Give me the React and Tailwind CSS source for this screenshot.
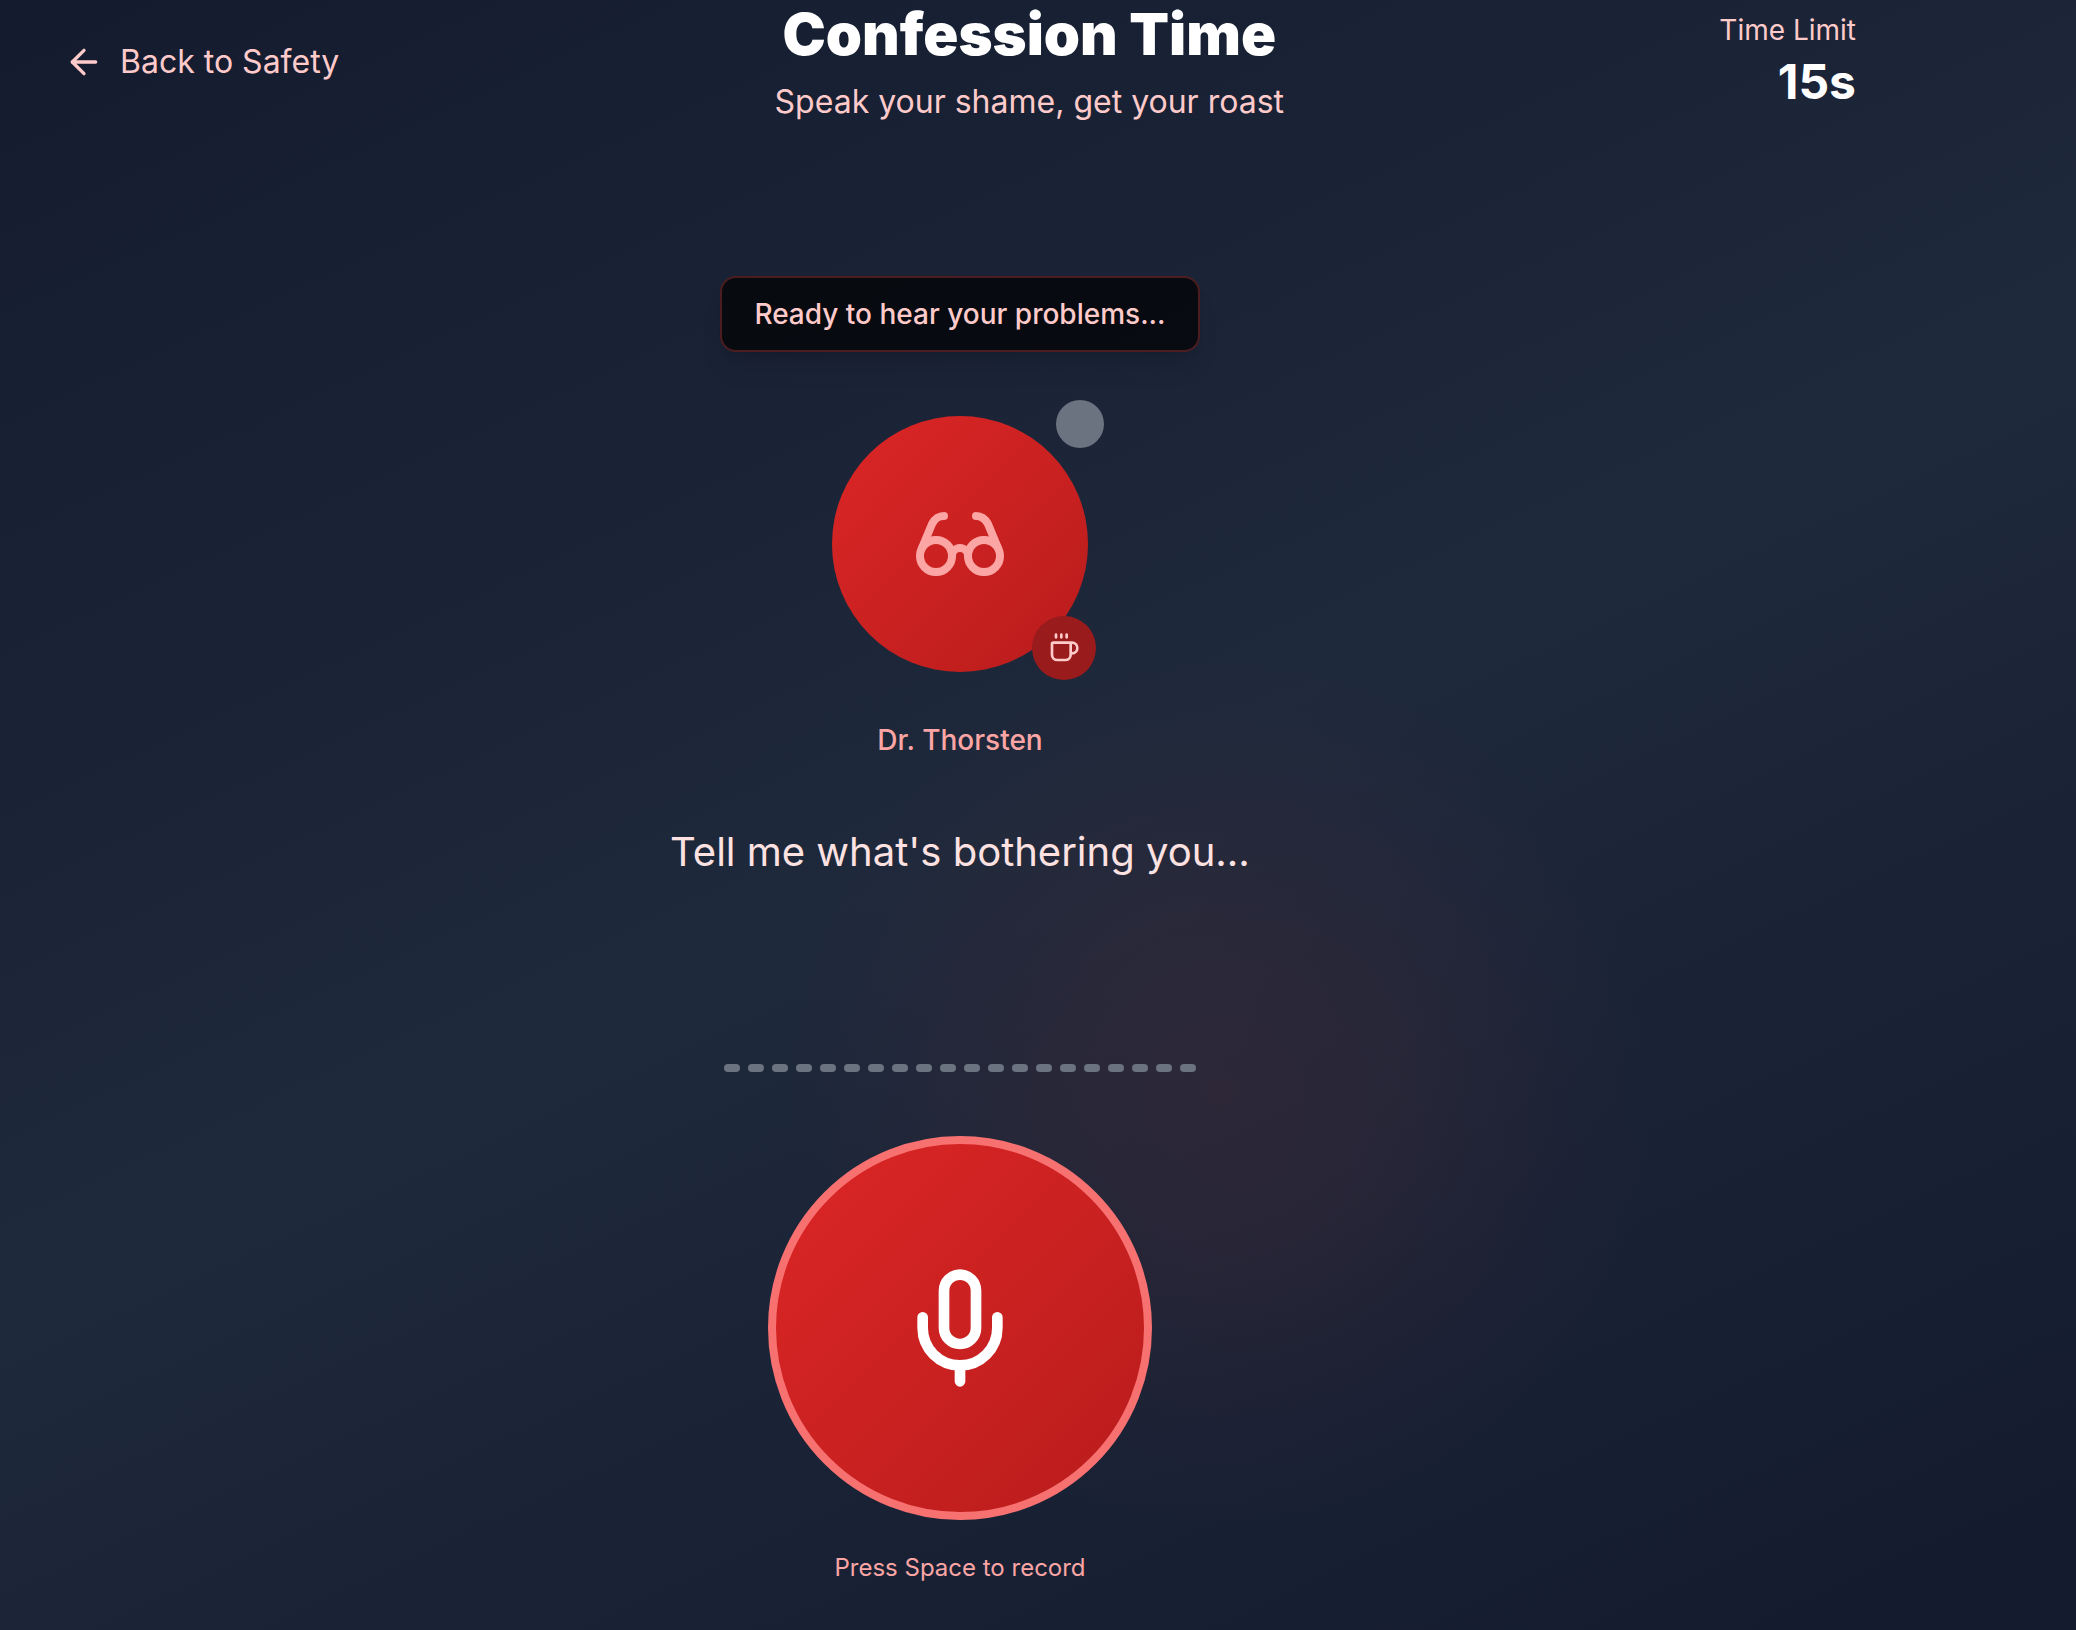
import { ArrowLeft } from "lucide-react";

const bars = Array.from({ length: 20 }, (_, i) => i);

const stroke = {
  viewBox: "0 0 24 24",
  fill: "none",
  stroke: "currentColor",
  strokeWidth: 2,
  strokeLinecap: "round",
  strokeLinejoin: "round",
  "aria-hidden": true,
};

function Glasses({ className }) {
  return (
    <svg {...stroke} className={className}>
      <circle cx="6" cy="15" r="4" />
      <circle cx="18" cy="15" r="4" />
      <path d="M14 15a2 2 0 0 0-2-2 2 2 0 0 0-2 2" />
      <path d="M2.5 13 5 7c.7-1.3 1.4-2 3-2" />
      <path d="M21.5 13 19 7c-.7-1.3-1.5-2-3-2" />
    </svg>
  );
}

function Coffee({ className }) {
  return (
    <svg {...stroke} className={className}>
      <path d="M10 2v2" />
      <path d="M14 2v2" />
      <path d="M6 2v2" />
      <path d="M16 8a1 1 0 0 1 1 1v8a4 4 0 0 1-4 4H7a4 4 0 0 1-4-4V9a1 1 0 0 1 1-1h14a4 4 0 1 1 0 8h-1" />
    </svg>
  );
}

function Mic({ className }) {
  return (
    <svg {...stroke} className={className}>
      <path d="M12 2a3 3 0 0 0-3 3v7a3 3 0 0 0 6 0V5a3 3 0 0 0-3-3Z" />
      <path d="M19 10v2a7 7 0 0 1-14 0v-2" />
      <path d="M12 19v3" />
    </svg>
  );
}

export default function App() {
  return (
    <div className="relative min-h-screen overflow-hidden bg-[linear-gradient(155deg,#141b2e_0%,#1e293b_50%,#131a2d_100%)] font-['Inter',sans-serif]">
      <div className="absolute right-[20%] bottom-[6%] size-[880px] rounded-full bg-[radial-gradient(closest-side,rgba(239,68,68,0.085),rgba(239,68,68,0.06)_40%,rgba(239,68,68,0.02)_75%,rgba(239,68,68,0))]" />
      <div className="relative max-w-[1920px]">
        <header className="flex items-center justify-between px-16">
          <button type="button" className="flex items-center gap-4 text-[32px] leading-[48px] text-[#fecaca]">
            <ArrowLeft className="size-10" strokeWidth={2} aria-hidden="true" />
            Back to Safety
          </button>
          <div className="text-center">
            <h1 className="text-[58px] leading-[68px] font-black text-white">Confession Time</h1>
            <p className="mt-3 text-[32px] leading-[44px] text-[#fecaca]">Speak your shame, get your roast</p>
          </div>
          <div className="text-right">
            <p className="text-[28px] leading-10 text-[#fecaca]">Time Limit</p>
            <p className="text-[48px] leading-[64px] font-bold text-white">15s</p>
          </div>
        </header>
        <main className="flex flex-col items-center pt-[152px]">
          <div className="rounded-2xl border-2 border-[#ef4444]/30 bg-black/70 px-8 py-4 text-[28px] leading-10 font-medium text-[#fecaca] shadow-xl">
            Ready to hear your problems...
          </div>
          <div className="relative mt-16 flex size-64 items-center justify-center rounded-full bg-linear-[135deg,#dc2626,#b91c1c]">
            <Glasses className="size-24 text-[#fca5a5]" />
            <span className="absolute -top-4 -right-4 size-12 rounded-full bg-[#6b7280]" />
            <span className="absolute -right-2 -bottom-2 flex size-16 items-center justify-center rounded-full bg-[#991b1b]">
              <Coffee className="size-8 text-[#fecaca]" />
            </span>
          </div>
          <p className="mt-12 text-[28px] leading-10 font-medium text-[#fca5a5]">Dr. Thorsten</p>
          <p className="mt-16 text-[40px] leading-[56px] text-[#fee2e2]">Tell me what's bothering you...</p>
          <div className="mt-46 flex gap-2" aria-hidden="true">
            {bars.map((i) => (
              <span key={i} className="h-2 w-4 rounded-full bg-[#6b7280]" />
            ))}
          </div>
          <button
            type="button"
            aria-label="Record"
            className="mt-16 flex size-96 items-center justify-center rounded-full border-8 border-[#f87171] bg-linear-[135deg,#dc2626,#b91c1c] text-white"
          >
            <Mic className="size-32" />
          </button>
          <p className="mt-8 text-2xl leading-8 text-[#fca5a5]">Press Space to record</p>
        </main>
      </div>
    </div>
  );
}
